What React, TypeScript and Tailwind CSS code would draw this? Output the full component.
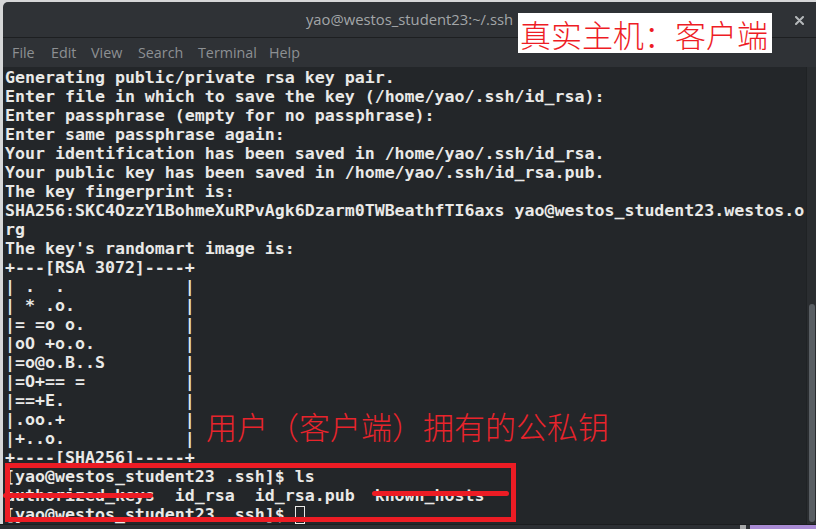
import React from "react";

const art = (s: string) => s.padEnd(18, " ") + "|";

const lines: string[] = [
  "Generating public/private rsa key pair.",
  "Enter file in which to save the key (/home/yao/.ssh/id_rsa):",
  "Enter passphrase (empty for no passphrase):",
  "Enter same passphrase again:",
  "Your identification has been saved in /home/yao/.ssh/id_rsa.",
  "Your public key has been saved in /home/yao/.ssh/id_rsa.pub.",
  "The key fingerprint is:",
  "SHA256:SKC4OzzY1BohmeXuRPvAgk6Dzarm0TWBeathfTI6axs yao@westos_student23.westos.o",
  "rg",
  "The key's randomart image is:",
  "+---[RSA 3072]----+",
  art("| .  ."),
  art("| * .o."),
  art("|= =o o."),
  art("|oO +o.o."),
  art("|=o@o.B..S"),
  art("|=O+== ="),
  art("|==+E."),
  art("|.oo.+"),
  art("|+..o."),
  "+----[SHA256]-----+",
  "[yao@westos_student23 .ssh]$ ls",
  "authorized_keys  id_rsa  id_rsa.pub  known_hosts",
];

const menu: [string, string][] = [
  ["File", "w-[39px]"],
  ["Edit", "w-[40px]"],
  ["View", "w-[47px]"],
  ["Search", "w-[60px]"],
  ["Terminal", "w-[71px]"],
  ["Help", "w-[50px]"],
];

export default function App() {
  return (
    <div className="relative w-[816px] h-[529px] overflow-hidden bg-[#d6d7d8]">
      {/* window */}
      <div className="ml-[3px] pt-[2px] w-[816px]">
        <div className="flex flex-col h-[522px] w-[816px] rounded-tl-[5px] overflow-hidden bg-[#2f3236]">
          {/* title bar */}
          <div className="relative h-[35px] flex items-center justify-center border-b border-[#1d1f21] box-content">
            <span
              className="text-[14.8px] text-[#a3a6a8] pr-[3px]"
              style={{ fontFamily: '"Open Sans", "Noto Sans", sans-serif' }}
            >
              yao@westos_student23:~/.ssh
            </span>
            <svg className="absolute right-[15px] top-[14px]" width="9" height="9" viewBox="0 0 9 9">
              <path d="M1 1 L8 8 M8 1 L1 8" stroke="#b5b8ba" strokeWidth="2" strokeLinecap="round" />
            </svg>
          </div>
          {/* menu bar */}
          <div
            className="h-[29px] flex items-center pl-[9px] text-[14.3px] text-[#8d9093]"
            style={{ fontFamily: '"Open Sans", "Noto Sans", sans-serif' }}
          >
            {menu.map(([m, w]) => (
              <span key={m} className={w}>
                {m}
              </span>
            ))}
          </div>
          {/* terminal */}
          <div className="flex-1 flex bg-[#232629]">
            <div
              className="flex-1 pl-[2px] pt-[1px] text-[16.6px] leading-[19px] font-bold text-[#e9e9e7] whitespace-pre"
              style={{ fontFamily: '"DejaVu Sans Mono", "Liberation Mono", monospace' }}
            >
              {lines.map((l, i) => (
                <div key={i} className="h-[19px]">
                  {l}
                </div>
              ))}
              <div className="h-[19px] flex items-center">
                <span>[yao@westos_student23 .ssh]$ </span>
                <span className="inline-block w-[10px] h-[18px] border border-[#e9e9e7]" />
              </div>
            </div>
            <div className="w-[13px] bg-[#2a2d30] border-l border-[#1f2224] relative">
              <div className="absolute left-[2px] top-[237px] w-[6px] h-[218px] rounded-full bg-[#595e63]" />
            </div>
          </div>
        </div>
      </div>
      {/* bottom strip */}
      <div className="flex h-[5px] border-t border-[#1b1d1f]">
        <div className="w-[740px] bg-[#2c2f33]" />
        <div className="w-[6px] bg-[#a6a7a8]" />
        <div className="w-[4px] bg-[#2c2f33]" />
        <div className="flex-1 bg-[#a98bd4]" />
      </div>

      {/* annotations */}
      <div
        className="absolute left-[518px] top-[13px] w-[254px] h-[40px] bg-white flex items-center pl-[2px] text-[31px] leading-none font-light text-[#ee1c25] whitespace-nowrap"
        style={{ fontFamily: '"Noto Sans CJK SC", sans-serif' }}
      >
        真实主机：客户端
      </div>
      <div
        className="absolute left-[206px] top-[410px] text-[31px] leading-none font-light text-[#e8242c] whitespace-nowrap"
        style={{ fontFamily: '"Noto Sans CJK SC", sans-serif' }}
      >
        用户（客户端）拥有的公私钥
      </div>
      <div className="absolute left-[5px] top-[463px] w-[511px] h-[59px] border-[5px] border-[#ec1c24]" />
      <div className="absolute left-[3px] top-[493px] w-[150px] h-[5px] rounded-full bg-[#ec1c24]" />
      <div className="absolute left-[372px] top-[491px] w-[137px] h-[5px] rounded-full bg-[#ec1c24]" />
    </div>
  );
}
